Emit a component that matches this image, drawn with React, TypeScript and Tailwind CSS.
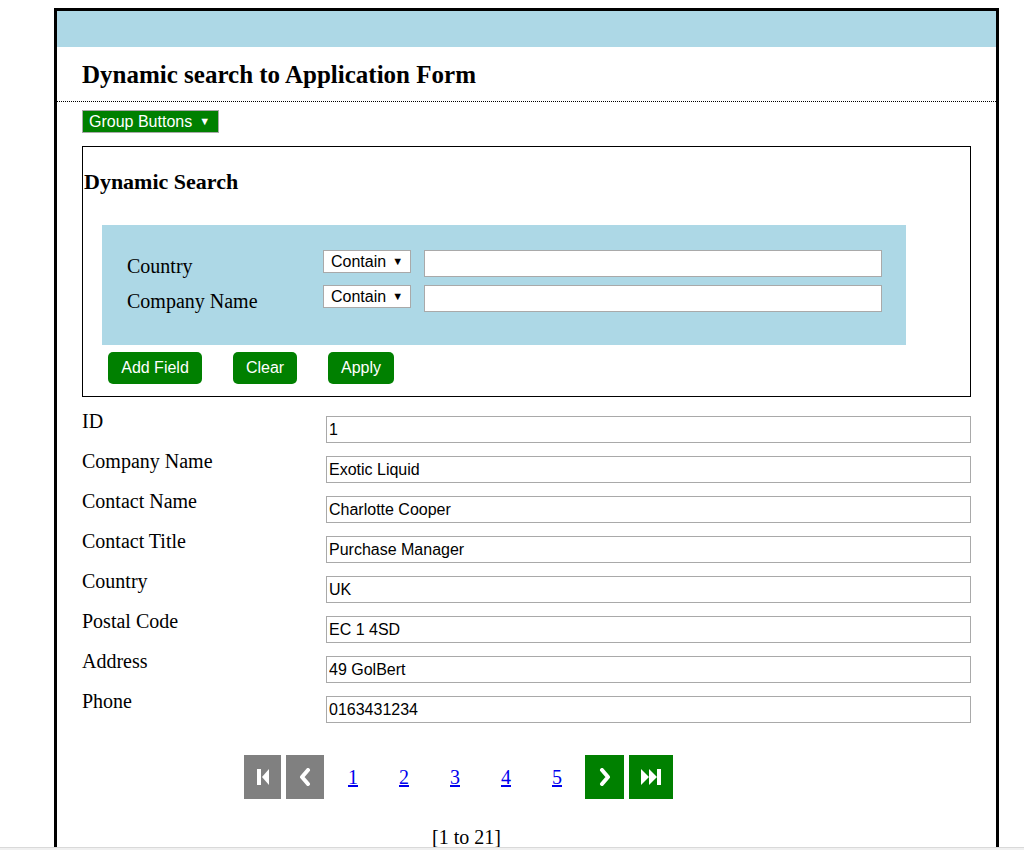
import React from 'react';

const serif = "font-['Liberation_Serif',serif]";
const sans = "font-['Liberation_Sans',Arial,sans-serif]";

const searchRows = ['Country', 'Company Name'];

const fields: [string, string][] = [
  ['ID', '1'],
  ['Company Name', 'Exotic Liquid'],
  ['Contact Name', 'Charlotte Cooper'],
  ['Contact Title', 'Purchase Manager'],
  ['Country', 'UK'],
  ['Postal Code', 'EC 1 4SD'],
  ['Address', '49 GolBert'],
  ['Phone', '0163431234'],
];

const FirstIcon = () => (
  <svg width="14" height="18" viewBox="0 0 14 18" fill="white">
    <rect x="1" y="1" width="4" height="16" />
    <path d="M13 1 L6 9 L13 17 Z" />
  </svg>
);

const PrevIcon = () => (
  <svg width="12" height="18" viewBox="0 0 12 18">
    <path d="M9 2 L3 9 L9 16" stroke="white" strokeWidth="4" fill="none" strokeLinecap="round" strokeLinejoin="round" />
  </svg>
);

const NextIcon = () => (
  <svg width="12" height="18" viewBox="0 0 12 18">
    <path d="M3 2 L9 9 L3 16" stroke="white" strokeWidth="4" fill="none" strokeLinecap="round" strokeLinejoin="round" />
  </svg>
);

const LastIcon = () => (
  <svg width="22" height="18" viewBox="0 0 22 18" fill="white">
    <path d="M1 1 L9 9 L1 17 Z" />
    <path d="M9 1 L17 9 L9 17 Z" />
    <rect x="17" y="1" width="4" height="16" />
  </svg>
);

export default function App() {
  return (
    <div className="relative w-[1024px] h-[850px] overflow-hidden bg-white">
      <div className="ml-[54px] mt-[8px] w-[945px] h-[900px] border-[3px] border-black">
        {/* Header */}
        <div className="h-[36px] bg-[#add8e6]" />
        <div className="h-[55px] flex items-center pl-[25px] pt-[1px] border-b border-dotted border-black">
          <h2 className={`${serif} text-[25px] font-bold text-black leading-[28px]`}>
            Dynamic search to Application Form
          </h2>
        </div>

        <div className="pl-[25px]">
          <button
            className={`${sans} mt-[8px] h-[23px] w-[137px] flex items-center pl-[6px] bg-[#008000] border border-[#a9a9a9] text-white text-[16px] leading-none`}
          >
            Group Buttons <span className="ml-[7px] text-[11px]">▼</span>
          </button>

          {/* Dynamic Search */}
          <div className="mt-[13px] w-[889px] border border-black pt-[22px] pb-[12px]">
            <h3 className={`${serif} pl-[1px] text-[22px] font-bold leading-[26px] text-black`}>Dynamic Search</h3>
            <div className="ml-[19px] mt-[30px] w-[804px] h-[120px] bg-[#add8e6] pt-[25px] pl-[25px] flex flex-col gap-[8px]">
              {searchRows.map((label) => (
                <div key={label} className="flex items-start h-[27px]">
                  <div className={`${serif} w-[196px] pt-[5px] text-[20px] leading-[22px] text-black`}>{label}</div>
                  <div className={`${sans} w-[88px] h-[23px] bg-white border border-[#a9a9a9] flex items-center pl-[7px] text-[16px] text-black leading-none`}>
                    Contain <span className="ml-[6px] text-[11px]">▼</span>
                  </div>
                  <input className={`${sans} ml-[13px] w-[458px] h-[27px] bg-white border border-[#a9a9a9] outline-none`} />
                </div>
              ))}
            </div>
            <div className="flex mt-[7px] ml-[25px] gap-[31px]">
              {[['Add Field', 'w-[94px]'], ['Clear', 'w-[64px]'], ['Apply', 'w-[66px]']].map(([t, w]) => (
                <button key={t} className={`${sans} ${w} h-[32px] rounded-[5px] bg-[#008000] text-white text-[16px]`}>
                  {t}
                </button>
              ))}
            </div>
          </div>

          {/* Record form */}
          <div className="mt-[15px] flex flex-col gap-[9px]">
            {fields.map(([label, value]) => (
              <div key={label} className="flex items-start h-[31px]">
                <div className={`${serif} w-[244px] -mt-[2px] text-[20px] leading-[22px] text-black`}>{label}</div>
                <input
                  readOnly
                  value={value}
                  className={`${sans} mt-[4px] w-[645px] h-[27px] border border-[#a9a9a9] pl-[2px] text-[16px] text-black outline-none`}
                />
              </div>
            ))}
          </div>
        </div>

        {/* Pagination */}
        <div className="mt-[32px] pl-[187px] flex items-center">
          <div className="w-[37px] h-[44px] bg-[#808080] flex items-center justify-center"><FirstIcon /></div>
          <div className="ml-[5px] w-[38px] h-[44px] bg-[#808080] flex items-center justify-center"><PrevIcon /></div>
          <div className={`${serif} ml-[24px] flex gap-[41px] text-[20px] text-[#0000ee] underline`}>
            {[1, 2, 3, 4, 5].map((n) => (
              <a key={n} className="w-[10px]">{n}</a>
            ))}
          </div>
          <div className="ml-[23px] w-[39px] h-[44px] bg-[#008000] flex items-center justify-center"><NextIcon /></div>
          <div className="ml-[5px] w-[44px] h-[44px] bg-[#008000] flex items-center justify-center"><LastIcon /></div>
        </div>
        <div className={`${serif} mt-[27px] pl-[375px] text-[20px] leading-[22px] text-black`}>[1 to 21]</div>
      </div>
      <div className="absolute bottom-0 left-0 w-full h-[3px] bg-[#f0f0f0] border-t border-[#d9d9d9]" />
    </div>
  );
}
